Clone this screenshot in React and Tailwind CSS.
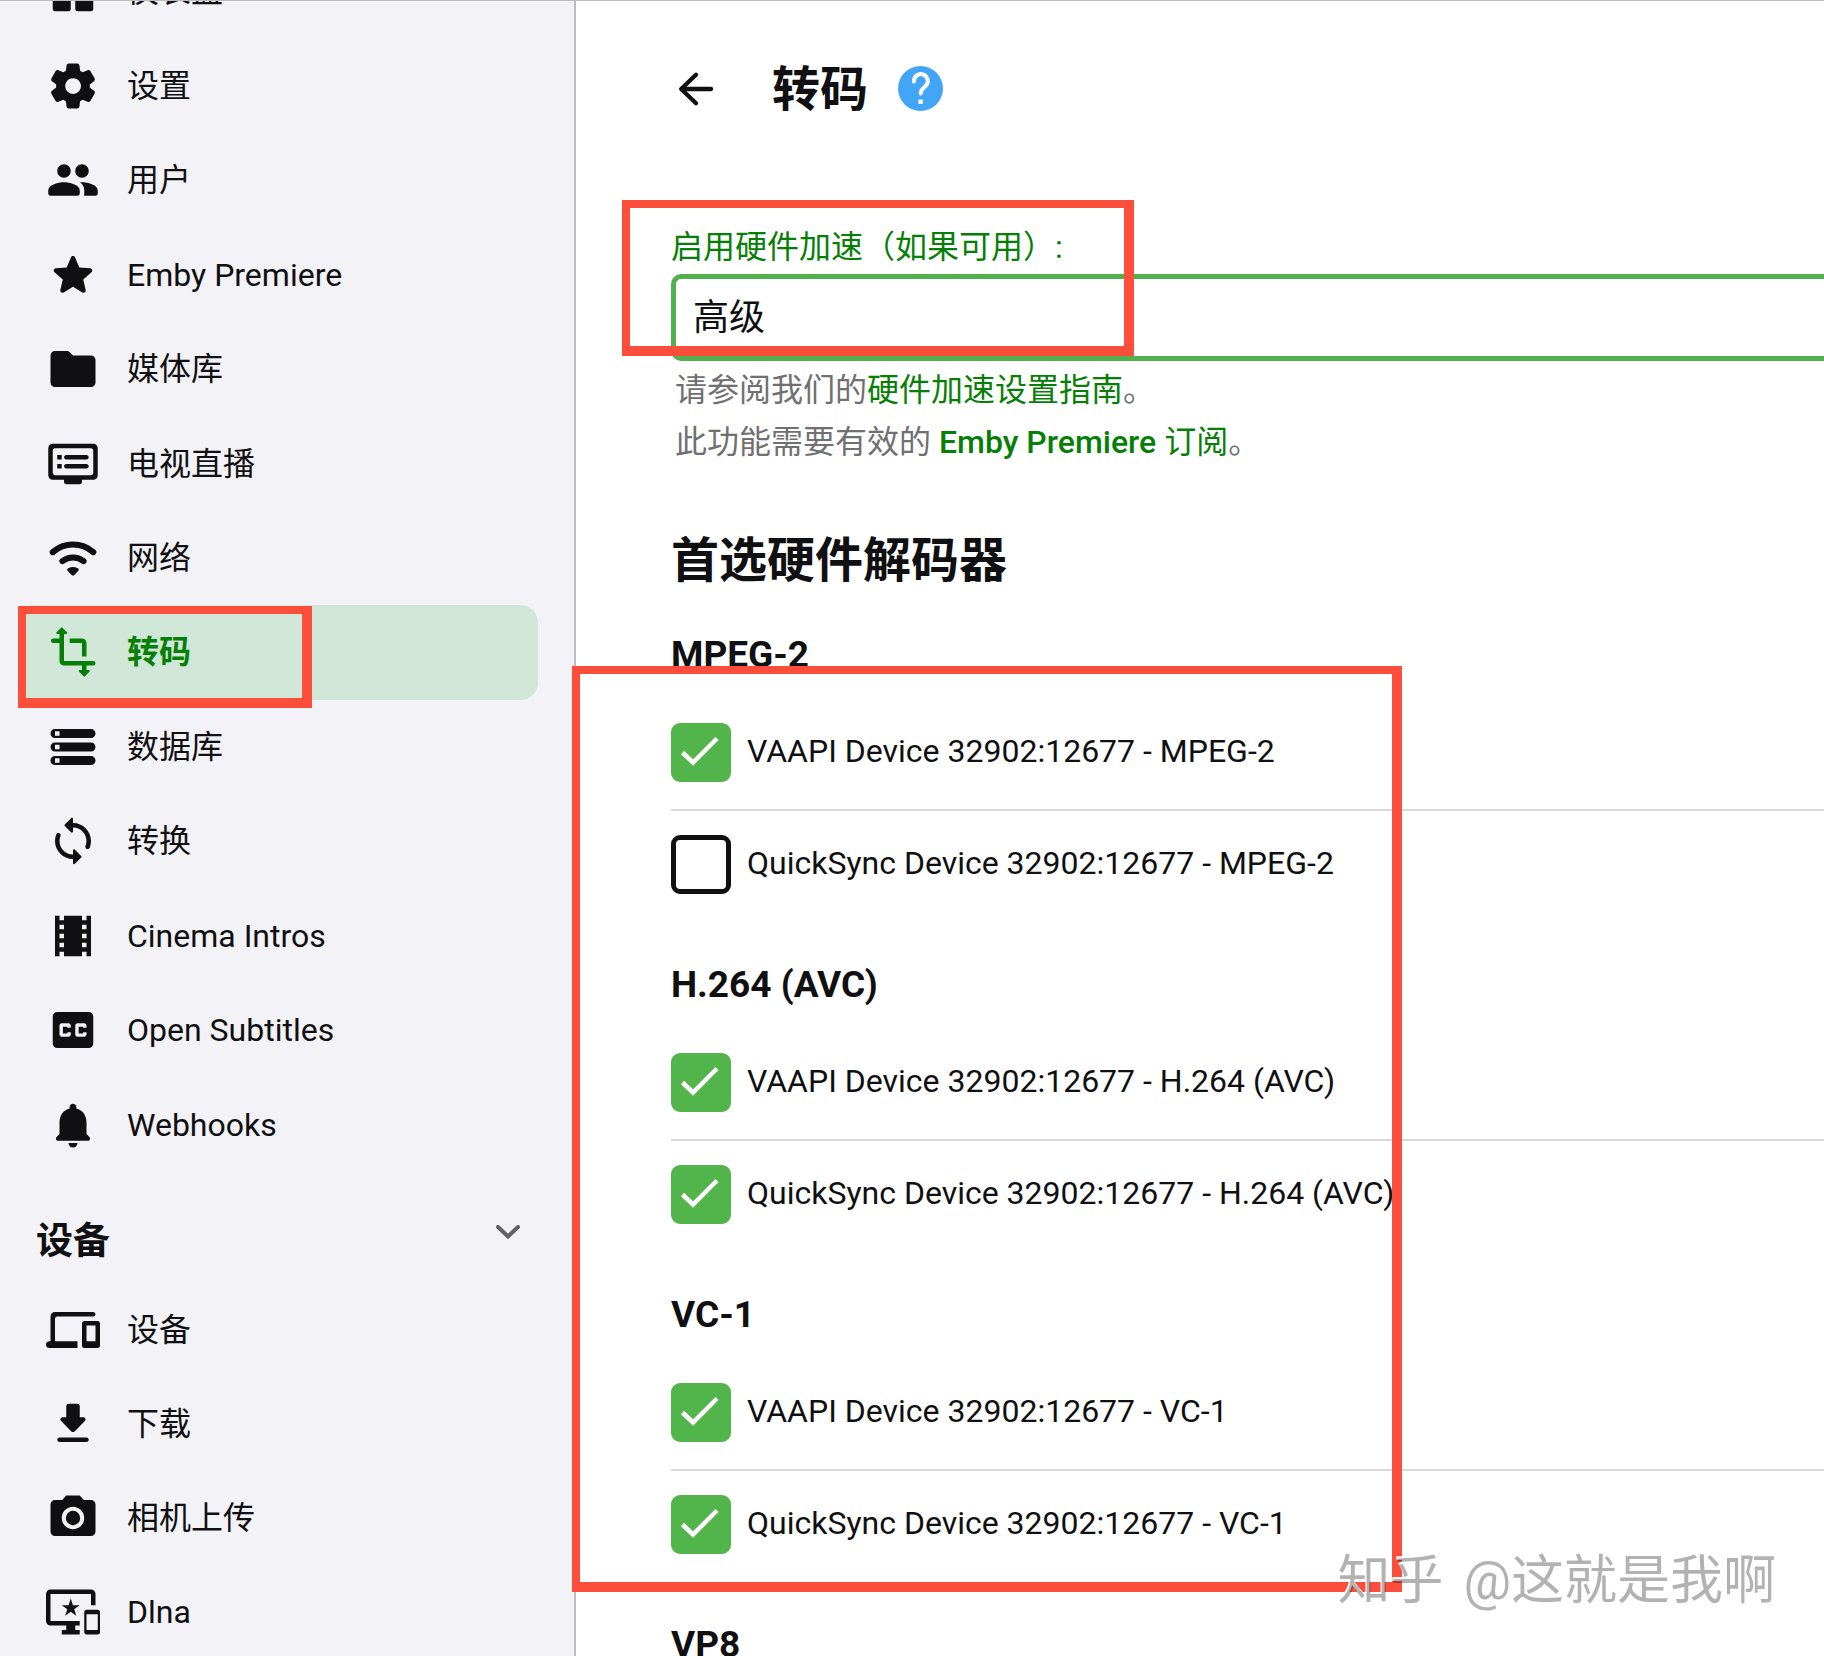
import { useState } from "react";
import {
  MdClosedCaption,
  MdImportantDevices,
  MdPhotoCamera,
  MdTheaters,
} from "react-icons/md";

const serverLinks = [
  { id: "dashboard", label: "仪表盘", icon: DashboardIcon },
  { id: "settings", label: "设置", icon: SettingsIcon },
  { id: "users", label: "用户", icon: PeopleIcon },
  { id: "premiere", label: "Emby Premiere", icon: StarIcon },
  { id: "library", label: "媒体库", icon: FolderIcon },
  { id: "livetv", label: "电视直播", icon: DvrIcon },
  { id: "network", label: "网络", icon: WifiIcon },
  { id: "transcoding", label: "转码", icon: TransformIcon },
  { id: "database", label: "数据库", icon: StorageIcon },
  { id: "conversions", label: "转换", icon: SyncIcon },
  { id: "intros", label: "Cinema Intros", icon: MdTheaters },
  { id: "subtitles", label: "Open Subtitles", icon: MdClosedCaption },
  { id: "webhooks", label: "Webhooks", icon: BellIcon },
];

const deviceLinks = [
  { id: "devices", label: "设备", icon: DevicesIcon },
  { id: "downloads", label: "下载", icon: DownloadIcon },
  { id: "camera", label: "相机上传", icon: MdPhotoCamera },
  { id: "dlna", label: "Dlna", icon: MdImportantDevices },
];

const initialCodecs = [
  {
    name: "MPEG-2",
    decoders: [
      { label: "VAAPI Device 32902:12677 - MPEG-2", enabled: true },
      { label: "QuickSync Device 32902:12677 - MPEG-2", enabled: false },
    ],
  },
  {
    name: "H.264 (AVC)",
    decoders: [
      { label: "VAAPI Device 32902:12677 - H.264 (AVC)", enabled: true },
      { label: "QuickSync Device 32902:12677 - H.264 (AVC)", enabled: true },
    ],
  },
  {
    name: "VC-1",
    decoders: [
      { label: "VAAPI Device 32902:12677 - VC-1", enabled: true },
      { label: "QuickSync Device 32902:12677 - VC-1", enabled: true },
    ],
  },
  { name: "VP8", decoders: [] },
];

const App = () => {
  const [mode, setMode] = useState("advanced");
  const [codecs, setCodecs] = useState(initialCodecs);

  const toggleDecoder = (codecName, label) => {
    setCodecs(
      codecs.map((codec) =>
        codec.name !== codecName
          ? codec
          : {
              ...codec,
              decoders: codec.decoders.map((d) =>
                d.label === label ? { ...d, enabled: !d.enabled } : d
              ),
            }
      )
    );
  };

  return (
    <div
      lang="zh-CN"
      className="relative flex h-screen overflow-hidden border-t border-[#bcbcc0] bg-white font-['Roboto','Noto_Sans_CJK_SC',sans-serif] text-[32px] leading-10 text-[#101012]"
    >
      {/* SIDEBAR */}
      <aside className="w-[576px] shrink-0 overflow-hidden border-r-2 border-[#bcbcc0] bg-[#f2f2f7] pl-[18px] pr-9">
        <nav className="-mt-[57px]">
          <ul className="grid h-[1228px] auto-rows-fr">
            {serverLinks.map((link) => (
              <NavItem
                key={link.id}
                link={link}
                active={link.id === "transcoding"}
              />
            ))}
          </ul>

          <button
            type="button"
            className="flex h-[111px] w-full items-center justify-between px-[18px] pt-5"
          >
            <span className="pt-2 text-[37px] font-bold">设备</span>
            <svg viewBox="0 0 24 14" className="mb-3 h-[14px] w-6">
              <path
                d="M2 2l10 9.500L22 2"
                fill="none"
                stroke="#626266"
                strokeWidth="4"
                strokeLinecap="round"
              />
            </svg>
          </button>

          <ul className="grid h-[376px] auto-rows-fr">
            {deviceLinks.map((link) => (
              <NavItem key={link.id} link={link} />
            ))}
          </ul>
        </nav>
      </aside>

      {/* CONTENT */}
      <main className="min-w-0 flex-1 overflow-hidden pl-[95px]">
        <header className="-ml-0.5 flex h-[175px] items-center">
          <button type="button" aria-label="返回">
            <svg viewBox="0 0 24 24" className="size-[54px]">
              <path
                d="M18.700 12H5.500M12 5.700L5.400 12L12 18.300"
                fill="none"
                stroke="currentColor"
                strokeWidth="1.9"
                strokeLinecap="round"
                strokeLinejoin="round"
              />
            </svg>
          </button>
          <h1 className="ml-[49px] pt-0.5 text-5xl font-bold">转码</h1>
          <a href="#help" aria-label="帮助" className="ml-[30px]">
            <svg viewBox="0 0 45 45" className="size-[45px]">
              <circle cx="22.500" cy="22.500" r="22.500" fill="#42a5f5" />
              <path
                d="M16 15.500a6.900 6.900 0 1 1 11.600 4.500c-2.500 2.300-4.900 3.600-4.900 7.500"
                fill="none"
                stroke="#fff"
                strokeWidth="4"
                strokeLinecap="round"
              />
              <rect x="20.400" y="33.500" width="4.500" height="4.500" rx="1" fill="#fff" />
            </svg>
          </a>
        </header>

        <div className="pt-[51px]">
          <label htmlFor="hwaccel" className="block text-[#067f06]">
            启用硬件加速（如果可用）:
          </label>
          <select
            id="hwaccel"
            value={mode}
            onChange={(e) => setMode(e.target.value)}
            className="mt-[7px] block h-[87px] w-full appearance-none rounded-l-[10px] border-[5px] border-r-0 border-[#52b04e] bg-white pl-[17px] text-4xl leading-[52px] outline-none"
          >
            <option value="advanced">高级</option>
            <option value="auto">是</option>
            <option value="off">否</option>
          </select>

          <div className="pl-1 pt-[3px] leading-[52px] text-[#707070]">
            <p>
              请参阅我们的
              <a href="#guide" className="text-[#067f06]">
                硬件加速设置指南
              </a>
              。
            </p>
            <p>
              此功能需要有效的{" "}
              <a href="#premiere" className="text-[#067f06]">
                <span className="font-medium">Emby Premiere</span> 订阅
              </a>
              。
            </p>
          </div>
        </div>

        <h2 className="mt-[63px] text-5xl font-bold leading-[60px]">
          首选硬件解码器
        </h2>

        <div className="mt-[41px] space-y-[41px]">
          {codecs.map((codec) => (
            <section key={codec.name}>
              <h3 className="text-[37px] font-bold leading-[45px]">
                {codec.name}
              </h3>
              <ul className="mt-[22px] divide-y-2 divide-[#d9d9db]">
                {codec.decoders.map((decoder) => (
                  <li key={decoder.label}>
                    <Decoder
                      label={decoder.label}
                      checked={decoder.enabled}
                      onChange={() => toggleDecoder(codec.name, decoder.label)}
                    />
                  </li>
                ))}
              </ul>
            </section>
          ))}
        </div>
      </main>

      {/* HIGHLIGHTS */}
      <Highlight className="left-[18px] top-[605px] h-[102px] w-[294px]" />
      <Highlight className="left-[622px] top-[199px] h-[156px] w-[512px]" />
      <Highlight className="left-[572px] top-[665px] h-[926px] w-[830px]" />

      <p className="absolute bottom-10 right-12 flex gap-5 text-[53px] leading-[70px] text-black/30 [text-shadow:-1px_-2px_0_#fff]">
        <span>知乎</span>
        <span>@这就是我啊</span>
      </p>
    </div>
  );
};

export default App;

const NavItem = ({ link, active }) => {
  const Icon = link.icon;
  return (
    <li className="grid">
      <a
        href={`#${link.id}`}
        className={
          active
            ? "flex items-center rounded-[18px] bg-[#d0e6d6] pl-7 font-bold text-[#067f06]"
            : "flex items-center pl-7"
        }
      >
        <Icon className="size-[54px] shrink-0" />
        <span className="ml-[27px]">{link.label}</span>
      </a>
    </li>
  );
};

const Decoder = ({ label, checked, onChange }) => (
  <label className="flex items-center gap-4 pb-[27px] pt-6">
    <span className="grid">
      <input
        type="checkbox"
        checked={checked}
        onChange={onChange}
        className="h-[59px] w-[60px] appearance-none rounded-[9px] border-[5px] border-[#101012] [grid-area:1/1] checked:border-[#52b54b] checked:bg-[#52b54b]"
      />
      {checked && (
        <svg
          viewBox="0 0 60 59"
          className="pointer-events-none h-[59px] w-[60px] [grid-area:1/1]"
        >
          <path
            d="M11.500 29.500L22 39.500L46 15.500"
            fill="none"
            stroke="#fff"
            strokeWidth="4.500"
          />
        </svg>
      )}
    </span>
    <span className="pb-1">{label}</span>
  </label>
);

const Highlight = ({ className }) => (
  <div
    className={`pointer-events-none absolute border-b-[10px] border-l-8 border-r-[10px] border-t-8 border-[#fd4d3b] ${className}`}
  />
);

/* ICONS */
function Glyph({ d, ...props }) {
  return (
    <svg viewBox="0 0 24 24" fill="currentColor" {...props}>
      <path d={d} />
    </svg>
  );
}

function DashboardIcon(props) {
  return (
    <svg viewBox="0 0 24 24" fill="currentColor" {...props}>
      <rect x="3" y="3" width="8" height="10" rx="1" />
      <rect x="13" y="3" width="8" height="6" rx="1" />
      <rect x="3" y="15" width="8" height="6" rx="1" />
      <rect x="13" y="11" width="8" height="10" rx="1" />
    </svg>
  );
}

function SettingsIcon(props) {
  return (
    <Glyph
      d="M19.500 12c0-.23-.01-.45-.03-.68l1.860-1.410c.4-.3.51-.86.26-1.300l-1.870-3.230a.987.987 0 0 0-1.250-.42l-2.150.91c-.37-.26-.76-.49-1.170-.68l-.29-2.310c-.06-.5-.49-.88-.99-.88h-3.730c-.51 0-.94.38-1 .88l-.29 2.310c-.41.19-.8.42-1.170.68l-2.150-.91c-.46-.2-1-.02-1.250.42L2.410 8.620c-.25.44-.14.99.26 1.300l1.860 1.410a7.343 7.343 0 0 0 0 1.350l-1.860 1.410c-.4.3-.51.86-.26 1.300l1.870 3.230c.25.44.79.62 1.250.42l2.150-.91c.37.26.76.49 1.170.68l.29 2.310c.06.5.49.88.99.88h3.730c.5 0 .93-.38.99-.88l.29-2.310c.41-.19.8-.42 1.170-.68l2.150.91c.46.2 1 .02 1.250-.42l1.870-3.230c.25-.44.14-.99-.26-1.300l-1.860-1.410c.03-.23.04-.45.04-.68zm-7.460 3.500c-1.930 0-3.500-1.570-3.500-3.500s1.570-3.500 3.500-3.500 3.500 1.570 3.500 3.500-1.570 3.500-3.500 3.500z"
      {...props}
    />
  );
}

function PeopleIcon(props) {
  return (
    <Glyph
      d="M16 11c1.660 0 2.990-1.340 2.990-3S17.660 5 16 5s-3 1.340-3 3 1.340 3 3 3zM8 11c1.660 0 2.990-1.340 2.990-3S9.660 5 8 5 5 6.340 5 8s1.340 3 3 3zM8 13c-2.330 0-7 1.170-7 3.500V18c0 .55.45 1 1 1h12c.55 0 1-.45 1-1v-1.500c0-2.330-4.670-3.500-7-3.500zM16 13c-.29 0-.62.02-.97.05 1.160.84 1.970 1.970 1.970 3.450V18c0 .35-.07.69-.18 1H22c.55 0 1-.45 1-1v-1.500c0-2.330-4.670-3.500-7-3.500z"
      {...props}
    />
  );
}

function StarIcon(props) {
  return (
    <Glyph
      d="M12 17.270l4.150 2.510c.76.46 1.690-.22 1.490-1.080l-1.100-4.720 3.670-3.180c.67-.58.31-1.680-.57-1.750l-4.830-.41-1.890-4.460c-.34-.81-1.500-.81-1.840 0L9.190 8.630l-4.830.41c-.88.07-1.240 1.170-.57 1.750l3.670 3.180-1.100 4.720c-.2.86.73 1.540 1.490 1.080l4.150-2.500z"
      {...props}
    />
  );
}

function FolderIcon(props) {
  return (
    <Glyph
      d="M10.590 4.590C10.210 4.210 9.700 4 9.170 4H4c-1.100 0-1.990.9-1.990 2L2 18c0 1.100.9 2 2 2h16c1.100 0 2-.9 2-2V8c0-1.100-.9-2-2-2h-8l-1.410-1.410z"
      {...props}
    />
  );
}

function DvrIcon(props) {
  return (
    <Glyph
      d="M21 3H3c-1.100 0-2 .9-2 2v12c0 1.100.9 2 2 2h5v1c0 .55.45 1 1 1h6c.55 0 1-.45 1-1v-1h5c1.100 0 1.990-.9 1.990-2L23 5c0-1.100-.9-2-2-2zm-1 14H4c-.55 0-1-.45-1-1V6c0-.55.45-1 1-1h16c.55 0 1 .45 1 1v10c0 .55-.45 1-1 1zM18 8H9c-.55 0-1 .45-1 1s.45 1 1 1h9c.55 0 1-.45 1-1s-.45-1-1-1zm0 4H9c-.55 0-1 .45-1 1s.45 1 1 1h9c.55 0 1-.45 1-1s-.45-1-1-1zM7 8H5v2h2V8zm0 4H5v2h2v-2z"
      {...props}
    />
  );
}

function WifiIcon(props) {
  return (
    <svg viewBox="0 0 24 24" fill="none" {...props}>
      <g stroke="currentColor" strokeWidth="2.700" strokeLinecap="round">
        <path d="M3 9.400A13.600 13.600 0 0 1 21 9.400" />
        <path d="M7.300 13.400A7.700 7.700 0 0 1 16.700 13.400" />
      </g>
      <path
        d="M9.700 17.800c-.5-.5-.3-1.100.2-1.300a4.600 4.600 0 0 1 4.200 0c.5.2.7.8.2 1.300l-1.700 1.700a.85.85 0 0 1-1.200 0z"
        fill="currentColor"
      />
    </svg>
  );
}

function TransformIcon(props) {
  return (
    <svg viewBox="0 0 24 24" fill="none" {...props}>
      <g stroke="currentColor" strokeWidth="2" strokeLinecap="round">
        <path d="M3.200 7H7M7 3.500V16a1 1 0 0 0 1 1h13M17 17v3.500" />
        <path d="M10.500 7H16a1 1 0 0 1 1 1v6" strokeLinecap="butt" />
      </g>
      <path
        d="M6.600 1.300a.5.500 0 0 1 .8 0L9.300 3.200c.3.300.1.800-.3.800h-4c-.4 0-.6-.5-.3-.8zM16.600 22.700a.5.500 0 0 0 .8 0l1.900-1.900c.3-.3.100-.8-.3-.8h-4c-.4 0-.6.5-.3.8z"
        fill="currentColor"
      />
    </svg>
  );
}

function StorageIcon(props) {
  return (
    <Glyph
      d="M4 20h16c1.100 0 2-.9 2-2s-.9-2-2-2H4c-1.100 0-2 .9-2 2s.9 2 2 2zm0-3h2v2H4v-2zM2 6c0 1.100.9 2 2 2h16c1.100 0 2-.9 2-2s-.9-2-2-2H4c-1.100 0-2 .9-2 2zm4 1H4V5h2v2zm-2 7h16c1.100 0 2-.9 2-2s-.9-2-2-2H4c-1.100 0-2 .9-2 2s.9 2 2 2zm0-3h2v2H4v-2z"
      {...props}
    />
  );
}

function SyncIcon(props) {
  return (
    <Glyph
      d="M12 4V2.210c0-.45-.54-.67-.85-.35l-2.800 2.790c-.2.2-.2.51 0 .71l2.790 2.790c.32.31.86.09.86-.36V6c3.310 0 6 2.690 6 6 0 .79-.15 1.560-.44 2.250-.15.36-.04.77.23 1.040.51.51 1.370.33 1.640-.34.37-.91.57-1.910.57-2.950 0-4.420-3.580-8-8-8zm0 14c-3.310 0-6-2.690-6-6 0-.79.15-1.560.44-2.250.15-.36.04-.77-.23-1.040-.51-.51-1.370-.33-1.640.34C4.200 9.960 4 10.960 4 12c0 4.420 3.580 8 8 8v1.790c0 .45.54.67.85.35l2.790-2.790c.2-.2.2-.51 0-.71l-2.790-2.790c-.31-.31-.85-.09-.85.36V18z"
      {...props}
    />
  );
}

function BellIcon(props) {
  return (
    <Glyph
      d="M12 22c1.100 0 2-.9 2-2h-4c0 1.100.89 2 2 2zm6-6v-5c0-3.070-1.640-5.640-4.500-6.320V4c0-.83-.67-1.500-1.500-1.500s-1.500.67-1.500 1.500v.68C7.630 5.360 6 7.920 6 11v5l-1.290 1.290c-.63.63-.19 1.710.7 1.710h13.170c.89 0 1.340-1.080.71-1.710L18 16z"
      {...props}
    />
  );
}

function DevicesIcon(props) {
  return (
    <Glyph
      d="M4 7c0-.55.45-1 1-1h16c.55 0 1-.45 1-1s-.45-1-1-1H4c-1.100 0-2 .9-2 2v11h-.5c-.83 0-1.500.67-1.500 1.500S.67 20 1.500 20H14v-3H4V7zm19 1h-6c-.55 0-1 .45-1 1v10c0 .55.45 1 1 1h6c.55 0 1-.45 1-1V9c0-.55-.45-1-1-1zm-1 9h-4v-7h4v7z"
      {...props}
    />
  );
}

function DownloadIcon(props) {
  return (
    <Glyph
      d="M16.590 9H15V4c0-.55-.45-1-1-1h-4c-.55 0-1 .45-1 1v5H7.410c-.89 0-1.340 1.080-.71 1.710l4.590 4.590c.39.39 1.020.39 1.410 0l4.590-4.590c.63-.63.19-1.710-.7-1.710zM5 19c0 .55.45 1 1 1h12c.55 0 1-.45 1-1s-.45-1-1-1H6c-.55 0-1 .45-1 1z"
      {...props}
    />
  );
}
